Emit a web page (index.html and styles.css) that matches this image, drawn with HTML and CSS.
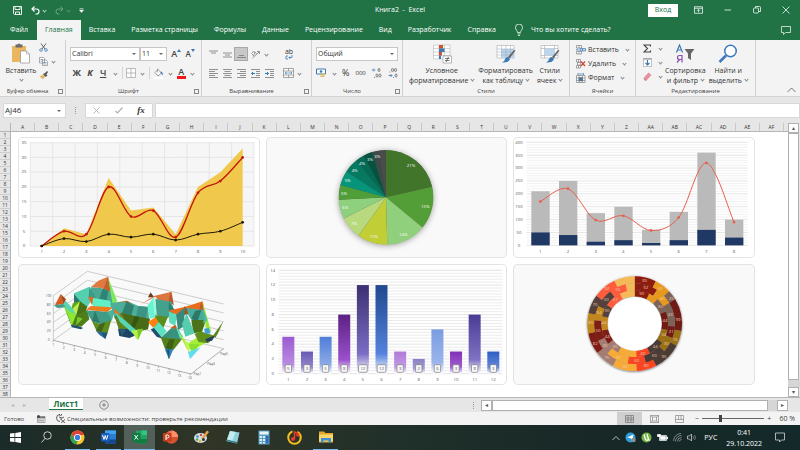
FILE: index.html
```html
<!DOCTYPE html>
<html lang="ru">
<head>
<meta charset="utf-8">
<title>Книга2 - Excel</title>
<link rel="stylesheet" href="styles.css">
</head>
<body>
<header class="titlebar">
  <div class="quick">
    <button aria-label="Сохранить"><svg width="9" height="9" viewBox="0 0 18 18" fill="none" stroke="#fff" stroke-width="1.8"><path d="M1 1h16v16H3l-2-2zM4 1v6h10V1M5 17v-5h8v5"/></svg></button>
    <button aria-label="Отменить"><svg width="9" height="9" viewBox="0 0 18 18" fill="none" stroke="#fff" stroke-width="2.4"><path d="M7 1L2 6l5 5M2 6h9a5 5 0 0 1 0 10H9"/></svg></button>
    <i class="caret pale"></i>
    <button class="dim" aria-label="Повторить"><svg width="9" height="9" viewBox="0 0 18 18" fill="none" stroke="#fff" stroke-width="2"><path d="M11 1l5 5-5 5M16 6H7a5 5 0 0 0 0 10h2"/></svg></button>
    <i class="caret pale dim"></i>
    <button class="custom" aria-label="Настройка"><svg width="5" height="5" viewBox="0 0 10 10"><path d="M1 1h8M1 4h8L5 9z" fill="#fff" stroke="#fff"/></svg></button>
  </div>
  <h1>Книга2 &nbsp;-&nbsp; Excel</h1>
  <div class="window-tools">
    <button class="login">Вход</button>
    <button aria-label="Параметры ленты"><svg width="9" height="8" viewBox="0 0 18 15" fill="none" stroke="#fff" stroke-width="1.5"><path d="M1 1h16v13H1zM1 4h16M9 12V7M6 9l3-3 3 3"/></svg></button>
    <button aria-label="Свернуть"><svg width="8" height="8" viewBox="0 0 16 16" stroke="#fff" stroke-width="1.5"><path d="M1 8h13"/></svg></button>
    <button aria-label="Развернуть"><svg width="8" height="8" viewBox="0 0 16 16" fill="none" stroke="#fff" stroke-width="1.5"><rect x="1" y="4" width="10" height="10" rx="2"/><path d="M5 4V1h8q2 0 2 2v8h-3"/></svg></button>
    <button aria-label="Закрыть"><svg width="8" height="8" viewBox="0 0 16 16" stroke="#fff" stroke-width="1.5"><path d="M1 1l14 14M15 1L1 15"/></svg></button>
  </div>
</header>
<nav class="tabs">
  <button>Файл</button><button class="on">Главная</button><button>Вставка</button><button>Разметка страницы</button><button>Формулы</button><button>Данные</button><button>Рецензирование</button><button>Вид</button><button>Разработчик</button><button>Справка</button>
  <button class="ask"><svg width="8" height="12" viewBox="0 0 16 24" fill="none" stroke="#fff" stroke-width="1.5"><path d="M5 17c0-4-4-5-4-10a7 7 0 0 1 14 0c0 5-4 6-4 10zM5 20h6M6 23h4"/></svg>Что вы хотите сделать?</button>
  <button class="comment" aria-label="Примечания"><svg width="10" height="9" viewBox="0 0 20 18" fill="none" stroke="#fff" stroke-width="1.4"><path d="M1 1h18v12H9l-4 4v-4H1z"/></svg></button>
</nav>
<section class="ribbon">
  <div class="group clipboard">
    <div class="tools">
      <button class="big"><svg width="20" height="21" viewBox="0 0 40 42"><path d="M2 6h28v32H2z" fill="#eab65f"/><path d="M9 3h4q3-4 6 0h4v6H9z" fill="#6a6a6a"/><path d="M19 16h12l6 6v18H19z" fill="#fff" stroke="#888" stroke-width="1.3"/><path d="M31 16v6h6" fill="none" stroke="#888"/></svg><span>Вставить</span><i class="caret"></i></button>
      <div class="stack">
        <button aria-label="Вырезать"><svg width="9" height="9" viewBox="0 0 18 18" fill="none"><path d="M4 1l8 11M14 1L6 12" stroke="#555" stroke-width="1.8"/><circle cx="4" cy="14" r="2.7" stroke="#3c78b4" stroke-width="1.5"/><circle cx="14" cy="14" r="2.7" stroke="#3c78b4" stroke-width="1.5"/></svg></button>
        <button aria-label="Копировать"><svg width="9" height="9" viewBox="0 0 18 18" fill="#fff" stroke="#777" stroke-width="1.2"><path d="M1 1h8l2 2v9H1zM7 6h7l3 3v8H7z"/><path d="M3 5h5M3 8h4M9 11h6M9 14h6" stroke="#3c78b4"/></svg><i class="caret"></i></button>
        <button aria-label="Формат по образцу"><svg width="9" height="9" viewBox="0 0 18 18"><path d="M1 11l8-4 3 4-4 6z" fill="#e5b869"/><path d="M8 6l5 6 4-3-2-2 3-5-2-2-4 4z" fill="#5a5a5a"/></svg></button>
      </div>
    </div>
    <div class="label wide">Буфер обмена<i class="launch"></i></div>
  </div>
  <div class="group font">
    <div class="tools rows">
      <div class="row">
        <span class="combo name"><select aria-label="Шрифт"><option>Calibri</option></select></span>
        <span class="combo size"><select aria-label="Размер"><option>11</option></select></span>
        <button class="letter grow" aria-label="Увеличить размер">A<svg width="4" height="3" viewBox="0 0 8 6" fill="#3c78b4"><path d="M0 6l4-6 4 6z"/></svg></button><button class="letter shrink" aria-label="Уменьшить размер">A<svg width="4" height="3" viewBox="0 0 8 6" fill="#3c78b4"><path d="M0 0l4 6 4-6z"/></svg></button>
      </div>
      <div class="row formats">
        <button class="letter bold">Ж</button><button class="letter ital">К</button><button class="letter under">Ч</button><i class="caret"></i><i class="rule"></i>
        <button aria-label="Границы"><svg width="10" height="10" viewBox="0 0 20 20" fill="#fff" stroke="#999" stroke-width="1.3"><path d="M1 1h18v18H1zM10 1v18M1 10h18"/></svg></button><i class="caret"></i><i class="rule"></i>
        <button aria-label="Заливка"><svg width="11" height="11" viewBox="0 0 22 22"><path d="M4 9l6-6 7 7-7 6z" fill="#fff" stroke="#666" stroke-width="1.3"/><path d="M9 1v8" stroke="#666"/><path d="M16 7q5 2 3 8-2-3-4-6" fill="#3c78b4"/><path d="M1 18h18v4H1z" fill="#fff"/></svg></button><i class="caret"></i>
        <button class="letter color">A</button><i class="caret"></i>
      </div>
    </div>
    <div class="label">Шрифт<i class="launch"></i></div>
  </div>
  <div class="group align">
    <div class="tools rows">
      <div class="row">
        <button aria-label="По верхнему краю"><svg class="ln" viewBox="0 0 18 18"><path d="M0 2h18M4 6h10"/></svg></button>
        <button aria-label="По середине"><svg class="ln" viewBox="0 0 18 18"><path d="M0 6h18M4 10h10M0 14h18"/></svg></button>
        <button class="pressed" aria-label="По нижнему краю"><svg class="ln" viewBox="0 0 18 18"><path d="M4 11h10M0 15h18"/></svg></button>
        <button aria-label="Ориентация"><svg class="ln" viewBox="0 0 18 18"><path d="M3 16L16 4M12 3h5v5M1 7l5 5M2 5q3-3 5 0t-2 5M7 3l4 4"/></svg></button><i class="caret"></i>
        <button class="wrap" aria-label="Перенести текст"><span>ab</span><svg width="8" height="5" viewBox="0 0 16 10" fill="none" stroke="#3c78b4" stroke-width="1.6"><path d="M6 2H2v6h4M14 0v5H8M10 3L8 5l2 3"/></svg></button>
      </div>
      <div class="row">
        <button aria-label="По левому краю"><svg class="ln" viewBox="0 0 18 18"><path d="M0 1h18M0 5h12M0 9h18M0 13h12M0 17h18"/></svg></button>
        <button aria-label="По центру"><svg class="ln" viewBox="0 0 18 18"><path d="M0 1h18M3 5h12M0 9h18M3 13h12M0 17h18"/></svg></button>
        <button aria-label="По правому краю"><svg class="ln" viewBox="0 0 18 18"><path d="M0 1h18M6 5h12M0 9h18M6 13h12M0 17h18"/></svg></button>
        <button aria-label="Уменьшить отступ"><svg class="ln" viewBox="0 0 18 18"><path d="M0 1h18M10 5h8M10 9h8M10 13h8M0 17h18"/><path class="blue" d="M8 9H1M4 6L1 9l3 3"/></svg></button>
        <button aria-label="Увеличить отступ"><svg class="ln" viewBox="0 0 18 18"><path d="M0 1h18M10 5h8M10 9h8M10 13h8M0 17h18"/><path class="blue" d="M0 9h7M4 6l3 3-3 3"/></svg></button>
        <button class="merge" aria-label="Объединить"><svg width="11" height="10" viewBox="0 0 22 20" fill="#fff" stroke="#777" stroke-width="1.3"><path d="M1 1h20v18H1zM1 6h20M1 14h20M11 1v5M11 14v5"/><path d="M4 10h14M7 8l-3 2 3 2M15 8l3 2-3 2" stroke="#3c78b4"/></svg></button><i class="caret"></i>
      </div>
    </div>
    <div class="label">Выравнивание<i class="launch"></i></div>
  </div>
  <div class="group number">
    <div class="tools rows">
      <div class="row"><span class="combo general"><select aria-label="Числовой формат"><option>Общий</option></select></span></div>
      <div class="row">
        <button aria-label="Финансовый"><svg width="11" height="10" viewBox="0 0 22 20"><path d="M1 2h18v10H1z" fill="#fff" stroke="#3c78b4" stroke-width="2"/><circle cx="10" cy="7" r="2.5" fill="#3c78b4"/><path d="M11 11h8v3h-8zM9 15h8v3H9z" fill="#e4b657"/></svg></button><i class="caret"></i>
        <button class="pct">%</button><button class="thou">000</button>
        <button class="dec" aria-label="Увеличить разрядность"><svg width="10" height="10" viewBox="0 0 20 20"><path d="M7 4H1M4 1L1 4l3 3" fill="none" stroke="#3c78b4" stroke-width="1.6"/><g fill="none" stroke="#555" stroke-width="1.4"><ellipse cx="14" cy="4" rx="2" ry="3.2"/><ellipse cx="10" cy="15" rx="2" ry="3.2"/><ellipse cx="16" cy="15" rx="2" ry="3.2"/><path d="M5 18v2"/></g></svg></button>
        <button class="dec" aria-label="Уменьшить разрядность"><svg width="10" height="10" viewBox="0 0 20 20"><path d="M1 15h7M5 12l3 3-3 3" fill="none" stroke="#3c78b4" stroke-width="1.6"/><g fill="none" stroke="#555" stroke-width="1.4"><ellipse cx="9" cy="4" rx="2" ry="3.2"/><ellipse cx="15" cy="4" rx="2" ry="3.2"/><ellipse cx="16" cy="15" rx="2" ry="3.2"/><path d="M4 7v2M11 18v2"/></g></svg></button>
      </div>
    </div>
    <div class="label">Число<i class="launch"></i></div>
  </div>
  <div class="group styles">
    <div class="tools">
      <button class="big"><svg width="20" height="20" viewBox="0 0 40 40"><path d="M3 2h33v28H3zM3 9h33M3 16h33M3 23h33M14 2v28M25 2v28" fill="#fff" stroke="#aaa"/><path d="M14 2h8v7h-8zM14 16h6v7h-6z" fill="#d0532f"/><path d="M14 9h11v7H14zM14 23h4v7h-4z" fill="#3c78b4"/><path d="M22 24h17v14H22z" fill="#fff" stroke="#777"/><path d="M26 29h9M26 33h9M33 26l-5 10" stroke="#444" stroke-width="1.4"/></svg><span>Условное<br>форматирование <i class="caret"></i></span></button>
      <button class="big"><svg width="20" height="20" viewBox="0 0 40 40"><path d="M2 3h34v25H2z" fill="#fff" stroke="#999"/><path d="M11 10h25v18H11z" fill="#bcd4ec"/><path d="M2 10h34M2 16h34M2 22h34M11 3v25M20 3v25M29 3v25" fill="none" stroke="#9ab"/><path d="M39 13L27 29l-3-3 12-14z" fill="#666"/><path d="M24 26l4 4q-3 8-16 7 6-3 6-7 2-4 6-4" fill="#3c78b4"/></svg><span>Форматировать<br>как таблицу <i class="caret"></i></span></button>
      <button class="big"><svg width="20" height="20" viewBox="0 0 40 40"><path d="M2 3h34v25H2zM2 9h34M2 23h34M9 3v25M29 3v25" fill="#fff" stroke="#999"/><path d="M9 9h20v14H9z" fill="#bcd4ec"/><path d="M39 13L27 29l-3-3 12-14z" fill="#666"/><path d="M24 26l4 4q-3 8-16 7 6-3 6-7 2-4 6-4" fill="#3c78b4"/></svg><span>Стили<br>ячеек <i class="caret"></i></span></button>
    </div>
    <div class="label plain">Стили</div>
  </div>
  <div class="group cells">
    <div class="tools stack">
      <button><svg width="10" height="10" viewBox="0 0 20 20" fill="#fff" stroke="#777" stroke-width="1.3"><path d="M1 1h10v5H1zM1 13h10v5H1zM6 1v5M6 13v5"/><path d="M8 7h11v5H8zM13 7v5" fill="#bcd4ec" stroke="#3c78b4"/><path d="M6 9.500H1M3 7L1 9.500 3 12" stroke="#3c78b4"/></svg>Вставить<i class="caret"></i></button>
      <button><svg width="10" height="10" viewBox="0 0 20 20" fill="#fff" stroke="#777" stroke-width="1.3"><path d="M1 1h8v5H1zM1 13h8v5H1zM5 1v5M5 13v5M3 7h6v5H3z"/><path d="M10 5l8 9M18 5l-8 9" stroke="#d0432f" stroke-width="2.4"/></svg>Удалить<i class="caret"></i></button>
      <button><svg width="10" height="10" viewBox="0 0 20 20" fill="#fff" stroke="#777" stroke-width="1.3"><path d="M1 5h17v14H1zM1 10h17M1 15h17M6 5v14M13 5v14"/><path d="M6 9h7v7H6z" fill="#3c78b4"/><path d="M4 2h11M4 0v4M15 0v4" stroke="#3c78b4"/></svg>Формат<i class="caret"></i></button>
    </div>
    <div class="label plain">Ячейки</div>
  </div>
  <div class="group edit">
    <div class="tools">
      <div class="stack">
        <button aria-label="Сумма"><svg width="9" height="9" viewBox="0 0 18 18" fill="none" stroke="#444" stroke-width="2.2"><path d="M15 5V2H2l7 7-7 7h13v-3"/></svg><i class="caret"></i></button>
        <button aria-label="Заполнить"><svg width="9" height="9" viewBox="0 0 18 18" fill="#fff" stroke="#888"><path d="M1 1h16v16H1z"/><path d="M1 2h16" stroke-width="2"/><path d="M9 4v10M5 10l4 4 4-4" fill="none" stroke="#3c78b4" stroke-width="2.4"/></svg><i class="caret"></i></button>
        <button aria-label="Очистить"><svg width="9" height="9" viewBox="0 0 18 18"><path d="M1 12L11 1l6 5L7 17H4z" fill="#e8909c"/><path d="M1 12l6 5H4z" fill="#c9606e"/></svg><i class="caret"></i></button>
      </div>
      <button class="big"><svg width="20" height="20" viewBox="0 0 40 40"><path d="M3 17L9 2l6 15M5 12h8" fill="none" stroke="#3c78b4" stroke-width="2.4"/><path d="M14 37V23H9q-4 0-4 4t4 4h5M9 31l-5 6" fill="none" stroke="#8a4fb0" stroke-width="2.400"/><path d="M19 10h20l-7 9v13l-6-4v-9z" fill="#666"/></svg><span>Сортировка<br>и фильтр <i class="caret"></i></span></button>
      <button class="big"><svg width="20" height="20" viewBox="0 0 40 40"><circle cx="25" cy="14" r="11.500" fill="#fff" stroke="#3c78c0" stroke-width="3"/><path d="M16 23L3 36" stroke="#3c78c0" stroke-width="5"/></svg><span>Найти и<br>выделить <i class="caret"></i></span></button>
    </div>
    <div class="label plain">Редактирование</div>
  </div>
  <button class="collapse" aria-label="Свернуть ленту"><svg width="9" height="6" viewBox="0 0 18 12" fill="none" stroke="#555" stroke-width="1.6"><path d="M1 10l8-8 8 8"/></svg></button>
</section>
<section class="formula">
  <span class="combo cell"><input aria-label="Имя" value="AJ46"></span>
  <i class="grip"></i>
  <div class="fx">
    <button aria-label="Отмена"><svg width="7" height="7" viewBox="0 0 14 14" stroke="#b0b0b0" stroke-width="1.8"><path d="M1 1l12 12M13 1L1 13"/></svg></button>
    <button aria-label="Ввод"><svg width="8" height="7" viewBox="0 0 16 14" fill="none" stroke="#b0b0b0" stroke-width="2.4"><path d="M1 8l4 4L15 1"/></svg></button>
    <button class="fn">fx</button>
  </div>
  <input class="expr" aria-label="Строка формул">
</section>
<main class="sheet">
  <div class="corner"></div>
  <div class="cols" id="cols"></div>
  <div class="vscroll"><button aria-label="Вверх">▴</button><div class="track"></div><div class="rest"></div><button aria-label="Вниз">▾</button></div>
  <div class="nums" id="nums"></div>
  <div class="canvas">
    <svg class="chart" id="area" viewBox="54 126 725 363"></svg>
    <svg class="chart hatch" id="pie" viewBox="11 21 725 363"></svg>
    <svg class="chart" id="combo" viewBox="25 51 725 363"></svg>
    <svg class="chart hatch" id="surface" viewBox="54 12 725 363"></svg>
    <svg class="chart" id="bars" viewBox="11 12 725 363"></svg>
    <svg class="chart hatch" id="rings" viewBox="25 14 725 363"></svg>
  </div>
</main>
<footer class="sheets">
  <span class="arrows"><i>◂</i><i>▸</i></span>
  <button class="sheet-tab">Лист1</button>
  <button class="add" aria-label="Новый лист"><svg width="10" height="10" viewBox="0 0 20 20" fill="none" stroke="#666" stroke-width="1.4"><circle cx="10" cy="10" r="8.500"/><path d="M10 6v8M6 10h8"/></svg></button>
  <i class="grip"></i>
  <div class="hscroll"><button aria-label="Влево">◂</button><div class="track"></div><div class="rest"></div><button aria-label="Вправо">▸</button></div>
</footer>
<div class="status">
  <span class="ready">Готово</span>
  <svg width="9" height="8" viewBox="0 0 18 16"><path d="M1 3h15v12H1z" fill="#fff" stroke="#555"/><path d="M1 3h15v4H1z" fill="#777"/><path d="M4 9v4M8 9v4M12 9v4" stroke="#555" stroke-width="2"/><circle cx="3" cy="3" r="3" fill="#444"/></svg>
  <svg class="acc" width="10" height="9" viewBox="0 0 20 18" fill="none" stroke="#444" stroke-width="1.700"><path d="M8 1a7 7 0 1 0 0 14M9 3a2 2 0 1 1 .1 0M6 6l6 2 4-2M10 8v4M10 11l8 7M18 11l-8 7"/></svg>
  <span class="access">Специальные возможности: проверьте рекомендации</span>
  <div class="views">
    <button class="on" aria-label="Обычный"><svg width="9" height="8" viewBox="0 0 18 16" fill="none" stroke="#666" stroke-width="1.2"><path d="M1 1h16v14H1zM1 6h16M1 10h16M6 1v14M12 1v14"/></svg></button>
    <button aria-label="Разметка"><svg width="9" height="8" viewBox="0 0 18 16" fill="none" stroke="#777" stroke-width="1.2"><path d="M1 1h16v14H1zM5 4h8v8H5zM1 1l4 3M17 1l-4 3M1 15l4-3M17 15l-4-3"/></svg></button>
    <button aria-label="Страничный"><svg width="9" height="8" viewBox="0 0 18 16" fill="none" stroke="#777" stroke-width="1.2"><path d="M1 1h16v14H1zM7 1v8H1M12 1v8h5M7 9h5"/></svg></button>
  </div>
  <label class="zoom"><span>−</span><input type="range" min="0" max="100" value="28" aria-label="Масштаб"><span>+</span></label>
  <span class="percent">60 %</span>
</div>
<nav class="taskbar">
  <button aria-label="Пуск"><svg width="11" height="11" viewBox="0 0 22 22" fill="#fff"><path d="M0 3l9-1v8H0zM10.500 2L22 0v10H10.500zM0 12h9v8l-9-1zM10.500 12H22v10l-11.500-2z"/></svg></button>
  <button aria-label="Поиск"><svg width="11" height="12" viewBox="0 0 22 24" fill="none" stroke="#ddd" stroke-width="1.800"><circle cx="13" cy="9" r="7.500"/><path d="M8 15l-7 8"/></svg></button>
  <button class="run" aria-label="Chrome"><svg width="15" height="15" viewBox="0 0 30 30"><circle cx="15" cy="15" r="14" fill="#f6c52c"/><path d="M3 8a14 14 0 0 1 25 2H15L9 18z" fill="#e04434"/><path d="M3 8l6 10 6 4-2 7A14 14 0 0 1 3 8" fill="#2fa253"/><circle cx="15" cy="15" r="7" fill="#fff"/><circle cx="15" cy="15" r="5.300" fill="#3c7be0"/></svg></button>
  <button class="run" aria-label="Word"><svg width="15" height="14" viewBox="0 0 30 28"><rect x="8" y="1" width="22" height="26" rx="2" fill="#2b7cd3"/><path d="M8 1h22v7H8z" fill="#41a5ee"/><path d="M8 19h22v8H8z" fill="#16498c"/><rect y="6" width="17" height="17" rx="2" fill="#185abd"/><path d="M3 10l3 9 2.500-8 2.500 8 3-9" fill="none" stroke="#fff" stroke-width="2"/></svg></button>
  <button class="run active" aria-label="Excel"><svg width="15" height="14" viewBox="0 0 30 28"><rect x="8" y="1" width="22" height="26" rx="2" fill="#21a366"/><path d="M19 1h11v9H19z" fill="#33c481"/><path d="M8 18h22v9H8z" fill="#107c41"/><rect y="6" width="17" height="17" rx="2" fill="#107c41"/><path d="M5 10l7 9M12 10l-7 9" stroke="#fff" stroke-width="2"/></svg></button>
  <button aria-label="PowerPoint"><svg width="15" height="14" viewBox="0 0 30 28"><circle cx="17" cy="14" r="13" fill="#ed6c47"/><path d="M17 1a13 13 0 0 1 13 13H17z" fill="#ff8f6b"/><path d="M4 14h26a13 13 0 0 1-26 0" fill="#d35230"/><rect y="6" width="17" height="17" rx="2" fill="#c43e1c"/><path d="M6 20V10h3q3 0 3 3t-3 3H6" fill="none" stroke="#fff" stroke-width="2"/></svg></button>
  <button aria-label="Paint"><svg width="15" height="14" viewBox="0 0 30 28"><ellipse cx="13" cy="16" rx="13" ry="10" fill="#d5e0e6"/><circle cx="7" cy="13" r="2.500" fill="#2f8fd0"/><circle cx="14" cy="10" r="2.500" fill="#d94b3a"/><circle cx="6" cy="19" r="2.500" fill="#54a845"/><circle cx="12" cy="22" r="2.500" fill="#e2b52e"/><path d="M14 17L26 1l4 3-12 16z" fill="#e5a04a"/><circle cx="19" cy="19" r="3" fill="#243a3a"/></svg></button>
  <button aria-label="Блокнот"><svg width="14" height="14" viewBox="0 0 28 28"><path d="M8 2l19 3-5 22-21-5z" fill="#8fd0dc"/><path d="M8 2l11 2-7 20-11-2z" fill="#c3ecf0"/><path d="M1 22l21 5v-3L2 19z" fill="#3c7b92"/></svg></button>
  <button aria-label="Калькулятор"><svg width="12" height="15" viewBox="0 0 24 30"><path d="M1 1h22v28H1z" fill="#5b9dc4"/><path d="M3 3h18v6H3z" fill="#e8f4fa"/><path d="M3 12h5v4H3zM10 12h4v4h-4zM3 18h5v4H3zM10 18h4v4h-4zM3 24h5v3H3zM10 24h4v3h-4z" fill="#dff0f8"/><path d="M16 12h5v15h-5z" fill="#2f6cb8"/></svg></button>
  <button aria-label="Яндекс Музыка"><svg width="15" height="15" viewBox="0 0 30 30"><circle cx="15" cy="15" r="12.500" fill="none" stroke="#f5c21c" stroke-width="4"/><path d="M11 0h10v7H11z" fill="#29332a"/><circle cx="12" cy="18" r="4" fill="#ee3b2c"/><path d="M15 18V4l8 4v4l-5-2" fill="none" stroke="#ee3b2c" stroke-width="3"/></svg></button>
  <button class="run" aria-label="Проводник"><svg width="14" height="12" viewBox="0 0 28 24"><path d="M0 1h10l3 3h15v19H0z" fill="#e5a62b"/><path d="M0 7h28v14H0z" fill="#fbd668"/><path d="M4 14h20v9h-5v-4H9v4H4z" fill="#3f8ed8"/></svg></button>
  <div class="tray">
    <svg width="8" height="6" viewBox="0 0 16 10" fill="none" stroke="#eee" stroke-width="1.500"><path d="M1 9l7-7 7 7"/></svg>
    <svg width="11" height="11" viewBox="0 0 22 22"><circle cx="11" cy="11" r="10" fill="#2f9fdc"/><path d="M4 11l13-6-2 11-5-4z" fill="#fff"/><circle cx="17" cy="16" r="4.500" fill="#8a8f92"/></svg>
    <svg width="11" height="11" viewBox="0 0 22 22"><circle cx="11" cy="11" r="10" fill="#71b640"/><path d="M6 5l3 10q2 3 6 0l-3-11M15 15l3 2" fill="none" stroke="#fff" stroke-width="2.600"/></svg>
    <svg width="11" height="9" viewBox="0 0 22 18" fill="none" stroke="#fff" stroke-width="1.500"><path d="M5 5h14v10H5z"/><path d="M7 7h10v6H7zM20 8h1v4h-1z" fill="#fff"/><path d="M1 3h6v4H1z" fill="#fff"/></svg>
    <svg width="9" height="9" viewBox="0 0 18 18" fill="none" stroke="#aaa" stroke-width="1.400"><path d="M1 16A15 15 0 0 1 16 1M5 17A12 12 0 0 1 17 5M9 17a8 8 0 0 1 8-8M13 17a4 4 0 0 1 4-4"/></svg>
    <svg width="10" height="9" viewBox="0 0 20 18" fill="none" stroke="#ddd" stroke-width="1.400"><path d="M1 6h4l4-4v14l-4-4H1z"/><path d="M12 6q2 3 0 6M15 4q4 5 0 10" stroke="#999"/></svg>
    <span class="lang">РУС</span>
    <time><span>0:41</span><span>29.10.2022</span></time>
    <svg class="note" width="10" height="11" viewBox="0 0 20 22" fill="none" stroke="#ddd" stroke-width="1.500"><path d="M1 2h18v14h-6l-4 4v-4H1z"/></svg>
  </div>
</nav>
<script src="charts.js"></script>
</body>
</html>
```
FILE: styles.css
```css
* { box-sizing: border-box; }
body {
  margin: 0;
  height: 100vh;
  display: flex;
  flex-direction: column;
  overflow: hidden;
  background: #e6e6e6;
  color: #333;
  font: 7px/10px "Open Sans", "Noto Sans", sans-serif;
}
button, input, select {
  font: inherit;
  color: inherit;
  margin: 0;
  padding: 0;
  border: 0;
  background: none;
  border-radius: 0;
  outline: 0;
  appearance: none;
}
button { display: flex; align-items: center; justify-content: center; white-space: nowrap; }
svg { display: block; flex: none; }
.caret {
  display: inline-block;
  flex: none;
  width: 3px;
  height: 3px;
  border: solid #888;
  border-width: 0 1px 1px 0;
  transform: rotate(45deg);
}
.caret.pale { border-color: #b5d3c2; }
.dim { opacity: .35; }

.titlebar { display: grid; grid-template-columns: 1fr auto 1fr; align-items: center; height: 20px; flex: none; background: #217346; color: #fff; }
.titlebar h1 { margin: 0; font-size: 7px; font-weight: 400; }
.quick { display: flex; align-items: center; gap: 7px; padding-left: 13px; }
.quick button:nth-child(n+2) { margin-left: 2px; }
.quick .caret { margin-left: -4px; }
.window-tools { display: flex; align-items: center; justify-content: flex-end; gap: 21px; padding-right: 10px; }
.login { width: 30px; height: 13px; background: #fff; color: #217346; margin-right: -5px; }

.tabs { display: flex; height: 20px; flex: none; background: #217346; color: #fff; padding-left: 2px; }
.tabs button { padding: 0 8px; }
.tabs .on { background: #f3f3f3; color: #217346; }
.tabs button:first-child { padding-right: 9px; }
.tabs .ask { gap: 8px; padding-left: 11px; }
.tabs .comment { margin-left: auto; padding-right: 9px; }

.ribbon { display: flex; height: 57px; flex: none; background: #f3f3f3; border-bottom: 1px solid #d2d2d2; }
.group { display: flex; flex-direction: column; border-right: 1px solid #d0d0d0; flex: none; }
.clipboard { width: 66px; }
.font { width: 136px; }
.align { width: 110px; }
.number { width: 91px; }
.styles { width: 167px; }
.cells { width: 66px; }
.edit { width: 120px; }
.group .tools { display: flex; flex: 1; padding: 3px 4px 0; }
.group .label { position: relative; height: 10px; padding-right: 10px; text-align: center; font-size: 6px; color: #444; }
.group .label.plain { padding-right: 0; }
.launch { position: absolute; right: 2px; top: 3px; width: 5px; height: 5px; border: solid #888; border-width: 1px 0 0 1px; }
.launch::after { content: ""; position: absolute; right: 0; bottom: 0; width: 3px; height: 3px; border: solid #888; border-width: 0 1px 1px 0; }
.big { flex-direction: column; justify-content: flex-start; text-align: center; gap: 2px; }
.clipboard .big { width: 34px; }
.clipboard .tools { gap: 0; }
.stack { display: flex; flex-direction: column; gap: 5px; }
.stack button { gap: 4px; justify-content: flex-start; height: 9px; }
.clipboard .stack button { padding-left: 1px; }
.tools.rows { flex-direction: column; gap: 3px; padding-top: 6px; }
.row { display: flex; align-items: center; height: 16px; }
.combo { position: relative; display: flex; height: 14px; background: #fff; border: 1px solid #c6c6c6; }
.combo > * { width: 100%; padding-left: 1px; }
.combo::after { content: ""; position: absolute; right: 3px; top: 5px; border: solid transparent; border-width: 2px 2px 0; border-top-color: #666; }
.combo.name { width: 71px; }
.combo.size { width: 28px; }
.letter { width: 14px; height: 14px; font-size: 9px; font-weight: 600; color: #444; }
.letter svg { align-self: flex-start; margin-top: 2px; }
.grow { margin-left: 2px; }
.shrink { font-size: 8px; }
.formats { gap: 2px; }
.formats .letter { width: 12px; }
.formats .letter:first-child { margin-left: 1px; }
.formats .letter.bold { font-weight: 700; }
.formats .letter.ital { font-style: italic; font-weight: 700; }
.under { text-decoration: underline; }
.formats .letter.color { width: 10px; height: 11px; border-bottom: 3px solid #f01818; line-height: 8px; }
.formats .caret { margin: 0 3px; }
.rule { width: 1px; height: 12px; background: #d4d4d4; margin-right: 1px; }
.align .row button { width: 14px; height: 14px; }
.ln { width: 9px; height: 9px; fill: none; stroke: #777; stroke-width: 1.6; }
.ln .blue { stroke: #3c78b4; stroke-width: 2; }
.pressed { background: #c8c8c8; box-shadow: 0 0 0 1px #a8a8a8 inset; }
.align .caret { margin-left: 3px; }
.align .row .wrap { flex-direction: column; margin-left: 14px; line-height: 6px; }
.align .row .merge { margin-left: 5px; }
.number .row { gap: 6px; }
.combo.general { width: 83px; }
.pct { font-size: 9px; }
.thou { font-size: 6px; }
.styles .tools { padding-top: 4px; padding-left: 6px; gap: 4px; }
.big .caret { margin: 0 0 2px 1px; }
.cells .tools { padding-left: 6px; padding-top: 5px; }
.cells button { gap: 2px; }
.cells .caret { margin-left: 5px; }
.edit .tools { padding-left: 7px; padding-top: 4px; gap: 3px; }
.edit .stack .caret { margin-left: 3px; }
.collapse { margin: auto 4px 3px auto; }

.formula { display: flex; align-items: center; height: 26px; flex: none; padding: 0 0 0 3px; }
.combo.cell { width: 63px; height: 15px; border-color: #d8d8d8; font-size: 8px; }
.combo.cell::after { top: 6px; right: 4px; }
.grip { width: 1px; height: 7px; margin: 0 9px; border-left: 1px dotted #999; }
.fx { display: flex; align-items: center; justify-content: space-around; width: 68px; height: 15px; background: #fff; border: 1px solid #d8d8d8; margin-right: 2px; }
.fn { font: italic 600 9px/10px "Liberation Serif", serif; }
.expr { flex: 1; height: 15px; background: #fff; border: 1px solid #d8d8d8; }

.sheet { flex: 1; min-height: 0; display: grid; grid-template: 9px 1fr / 11px 1fr 12px; background: #fff; }
.corner { background: #e6e6e6; border: solid #b5b5b5; border-width: 0 1px 1px 0; }
.cols { display: grid; grid-template-columns: repeat(32, 1fr); padding-right: 4px; background: #e6e6e6; border-bottom: 1px solid #b5b5b5; font-size: 5px; line-height: 8px; text-align: center; }
.cols span { border-right: 1px solid #c8c8c8; }
.vscroll { grid-row: 1 / 3; grid-column: 3; display: flex; flex-direction: column; background: #e6e6e6; }
.nums { grid-column: 1; grid-row: 2; overflow: hidden; background: #e6e6e6; border-right: 1px solid #b5b5b5; font-size: 5px; display: grid; grid-auto-rows: 1fr; line-height: 6px; text-align: center; }
.nums span { border-bottom: 1px solid #cdcdcd; }
.canvas { grid-column: 2; grid-row: 2; display: grid; grid-template-columns: repeat(3, 1fr); gap: 6px; align-content: start; padding: 5px 33px 0 7px; }
.chart { width: 100%; height: auto; background: #fff; border-radius: 5px; box-shadow: 0 0 0 1px #e3e3e3 inset; font-size: 13px; fill: #555; text-anchor: middle; overflow: hidden; }
.hatch { background: #f9f9f9; }
.chart .light { fill: #fff; }
.vscroll button, .hscroll button { width: 11px; height: 10px; flex: none; background: #fff; border: 1px solid #b0b0b0; font-size: 6px; line-height: 6px; color: #555; }
.hscroll button { height: 11px; }
.vscroll .track { flex: 1; width: 11px; background: #fff; border: 1px solid #b0b0b0; }
.vscroll .rest { height: 7px; background: #d6d6d6; }

.sheets { display: flex; align-items: center; height: 15px; flex: none; border-top: 1px solid #b5b5b5; padding-right: 12px; }
.arrows { display: flex; gap: 9px; width: 49px; padding-left: 11px; color: #b5b5b5; font-size: 6px; }
.arrows i { font-style: normal; }
.sheet-tab { width: 34px; height: 12px; align-self: flex-start; background: #fff; border-bottom: 1px solid #217346; color: #217346; font-weight: 700; font-size: 8px; }
.add { margin-left: 16px; }
.sheets .grip { margin-left: auto; margin-right: 7px; }
.hscroll { display: flex; flex: 0 0 39%; }
.hscroll .track { flex: 1; background: #fff; border: 1px solid #b0b0b0; }
.hscroll .rest { width: 9px; background: #d6d6d6; }

.status { display: flex; align-items: center; height: 13px; flex: none; background: #f3f3f3; color: #444; font-size: 6px; }
.status .ready { width: 33px; padding-left: 4px; margin-right: 4px; }
.status .acc { margin-left: 10px; margin-right: 1px; }
.views { display: flex; margin-left: auto; }
.views button { width: 25px; height: 13px; }
.views .on { background: #cfcfcf; }
.zoom { display: flex; align-items: center; gap: 3px; margin-left: 3px; font-size: 7px; }
.zoom input { width: 62px; height: 9px; background: linear-gradient(#666, #666) center / 100% 1px no-repeat; }
.zoom input::-webkit-slider-thumb { appearance: none; width: 3px; height: 7px; background: #444; }
.percent { margin: 0 5px 0 8px; font-size: 7px; }

.taskbar { display: flex; height: 25px; flex: none; background: linear-gradient(90deg, #1a2b29, #303526 26%, #20302a 50%, #172827 75%, #14292a); color: #fff; }
.taskbar > button { width: 31px; padding-bottom: 1px; }
.taskbar .run { background: linear-gradient(#76b9ed, #76b9ed) center bottom / 25px 1px no-repeat; }
.taskbar .active { background: linear-gradient(#76b9ed, #76b9ed) center bottom / 100% 1px no-repeat, #53605a; }
.tray { display: flex; align-items: center; gap: 5px; margin-left: auto; padding-right: 15px; }
.lang { margin-left: 2px; }
.tray time { display: flex; flex-direction: column; align-items: center; margin: 0 8px 0 4px; line-height: 11px; }
```
FILE: charts.js
```js
const $ = id => document.getElementById(id);

const letter = i => (i > 25 ? 'A' : '') + String.fromCharCode(65 + i % 26);
$('cols').innerHTML = Array.from({ length: 32 }, (_, i) => `<span>${letter(i)}</span>`).join('');
$('nums').innerHTML = Array.from({ length: 38 }, (_, i) => `<span>${i + 1}</span>`).join('');

const text = (x, y, s, extra = '') => `<text x="${x}" y="${y}" ${extra}>${s}</text>`;
const line = (x1, y1, x2, y2, c, w = 1) => `<path d="M${x1} ${y1}L${x2} ${y2}" stroke="${c}" stroke-width="${w}"/>`;
const rect = (x, y, w, h, c, extra = '') => `<rect x="${x}" y="${y}" width="${w}" height="${h}" fill="${c}" ${extra}/>`;

function smooth(p) {
  let d = `M${p[0]}`;
  for (let i = 0; i < p.length - 1; i++) {
    const a = p[i - 1] || p[i], b = p[i], c = p[i + 1], e = p[i + 2] || c;
    d += `C${b[0] + (c[0] - a[0]) / 6} ${b[1] + (c[1] - a[1]) / 6} ${c[0] - (e[0] - b[0]) / 6} ${c[1] - (e[1] - b[1]) / 6} ${c}`;
  }
  return d;
}
const curve = (p, c, w, r) => `<path d="${smooth(p)}" fill="none" stroke="${c}" stroke-width="${w}"/>` +
  p.map(q => `<circle cx="${q[0]}" cy="${q[1]}" r="${r}" fill="${c}"/>`).join('');

function drawArea() {
  const pts = v => v.map((n, i) => [125 + 67 * i, 453 - n * 8.857]);
  let s = '<defs><pattern id="h" width="5" height="5" patternUnits="userSpaceOnUse"><rect width="5" height="5" fill="#fafafa"/><path d="M0 0l5 5" stroke="#e6e6e6"/></pattern></defs>' + rect(91, 142, 671, 311, 'url(#h)');
  for (let k = 0; k <= 10; k++) s += line(91 + 67.1 * k, 142, 91 + 67.1 * k, 453, '#dedede', 2);
  for (let k = 0; k <= 7; k++) s += line(91, 453 - 44.3 * k, 762, 453 - 44.3 * k, '#dedede', 2) + text(72, 457 - 44.3 * k, k * 5);
  s += `<polygon points="${pts([0, 6, 4, 23, 12, 13, 4, 20, 25, 33]).join(' ')} 728,453" fill="#f0c84c"/>`;
  s += curve(pts([0, 5, 4, 20, 10, 12, 3, 18, 22, 30]), '#c4160c', 4, 4);
  s += curve(pts([0, 2.5, 1.5, 4, 3, 4, 2, 4, 5, 8]), '#1c1608', 3, 4);
  for (let i = 0; i < 10; i++) s += text(125 + 67 * i, 475, i + 1);
  $('area').innerHTML = s;
}

const at = (cx, cy, r, deg) => [cx + r * Math.sin(deg * Math.PI / 180), cy - r * Math.cos(deg * Math.PI / 180)];

function drawPie() {
  const ends = [77, 129.5, 178.5, 215.6, 243.4, 267, 285, 303, 321, 332, 343, 352, 360];
  const colors = ['#40752a', '#539e36', '#90cf7c', '#c1ce36', '#b9d97e', '#8ed07e', '#4f9e38', '#06957a', '#067a61', '#046a54', '#04523f', '#3d4a46', '#4b4b4b'];
  let s = '<defs><filter id="sh" x="-20%" y="-20%" width="140%" height="140%"><feDropShadow dx="0" dy="3" stdDeviation="10" flood-opacity=".4"/></filter></defs><circle cx="371" cy="202" r="141" fill="#555" filter="url(#sh)"/>';
  let from = 0;
  ends.forEach((e, i) => {
    s += `<path d="M371 202L${at(371, 202, 142, from)}A142 142 0 0 1 ${at(371, 202, 142, e)}Z" fill="${colors[i]}"/>`;
    from = e;
  });
  [[446, 112, 21], [489, 233, 15], [423, 317, 14], [334, 325, 11], [275, 286, 7], [249, 238, 6], [245, 194, 5], [256, 157, 5], [277, 126, 4], [299, 106, 4], [323, 92, 3], [345, 85, 3]]
    .forEach(l => s += text(l[0], l[1], l[2] + '%', 'class="light"'));
  $('pie').innerHTML = s;
}

function drawCombo() {
  const y = v => 376 - v * .7725;
  let s = '';
  for (let v = 0; v <= 400; v += 10) s += line(66, y(v), 729, y(v), v % 50 ? '#ececec' : '#d9d9d9', 2);
  for (let v = 0; v <= 400; v += 50) s += text(43, y(v) + 4, v);
  const total = [210, 250, 125, 150, 60, 130, 360, 100], base = [50, 40, 14, 20, 9, 20, 60, 30];
  total.forEach((t, i) => {
    const x = 80 + 83 * i;
    s += rect(x, y(t), 55, t * .7725, '#bababa') + rect(x, y(base[i]), 55, base[i] * .7725, '#1f3864') + text(x + 27, 398, i + 1);
  });
  s += curve([170, 220, 98, 115, 58, 108, 320, 90].map((v, i) => [107 + 83 * i, y(v)]), '#e8604f', 3, 4);
  $('combo').innerHTML = s;
}

function drawBars() {
  const data = [[5, '#9a5bd0', '#b98be0'], [3, '#6757b4', '#9287cc'], [5, '#4f7dd6', '#8aaae6'], [8, '#5c2182', '#9a50cc'], [12, '#3c3070', '#7b6cc4'], [12, '#20488f', '#5482dc'], [3, '#b07ad8', '#c49ae4'], [2, '#8880c4', '#a59fd6'], [6, '#7a9ce0', '#9ab5ec'], [3, '#7d30b4', '#a25cd2'], [8, '#4a3c94', '#7f72c4'], [3, '#2c5cc4', '#6288dc']];
  let s = '<defs>' + data.map((d, i) => `<linearGradient id="b${i}" x2="0" y2="1"><stop stop-color="${d[1]}"/><stop offset="${.8 - .3 / d[0]}" stop-color="${d[2]}"/><stop offset="1" stop-color="#fff"/></linearGradient>`).join('') + '</defs>';
  for (let k = 0; k <= 35; k++) s += line(49, 341 - k * 8.857, 720, 341 - k * 8.857, k % 5 ? '#e2e2e2' : '#d4d4d4', 2);
  for (let k = 0; k <= 7; k++) s += text(31, 345 - k * 44.3, k * 2);
  data.forEach((d, i) => {
    const x = 78 + 55.9 * i, h = d[0] * 22.143, w = d[0] > 9 ? 26 : 19;
    s += rect(x - 18, 341 - h, 36, h, `url(#b${i})`);
    s += rect(x - w / 2, 314, w, 23, '#f8f8f8', 'stroke="#777" stroke-width="2" rx="3"');
    s += text(x, 330, d[0]) + text(x, 362, i + 1);
  });
  $('bars').innerHTML = s;
}

function drawRings() {
  const colors = ['#8c1a10', '#e8991d', '#7c6359', '#6f1b14', '#9a7016', '#4b3a36', '#fb4524', '#f7aa38', '#a47c72', '#7e1b14', '#c2871c', '#54403b', '#ff5b3c', '#f6b958'];
  const rings = [
    [142, 121, [26.4, 46.7, 59, 98.8, 117.8, 153, 177.6, 207.5, 232, 258, 283, 306, 334.7, 360]],
    [121, 100, [33.5, 59, 94, 111, 133, 164, 190, 222.5, 245, 275, 296, 323, 347, 360]],
    [100, 82, [26, 43, 69, 101, 125, 153, 177, 210, 233, 258, 283, 304, 334, 360]]
  ];
  let s = '<defs><filter id="rs" x="-20%" y="-20%" width="140%" height="140%"><feDropShadow dx="0" dy="2" stdDeviation="3" flood-opacity=".6"/></filter></defs><g filter="url(#rs)">';
  rings.forEach(([R, r, ends]) => {
    let from = 0;
    ends.forEach((e, i) => {
      s += `<path d="M${at(390, 193, R, from)}A${R} ${R} 0 0 1 ${at(390, 193, R, e)}L${at(390, 193, r, e)}A${r} ${r} 0 0 0 ${at(390, 193, r, from)}Z" fill="${colors[i]}"/>`;
      from = e;
    });
  });
  s += '</g><circle cx="390" cy="193" r="80" fill="#fff"/>';
  [[420, 69, 85], [423, 90, 92], [411, 107, 90], [466, 92, 50], [473, 122, 40], [500, 123, 25], [467, 145, 35], [497, 169, 43], [481, 188, 44], [520, 184, 99], [500, 222, 21], [512, 244, 76], [477, 230, 34], [485, 258, 30], [452, 265, 44], [478, 295, 95], [449, 292, 50], [425, 324, 80], [396, 307, 60], [414, 286, 40], [361, 325, 90], [340, 300, 70], [306, 299, 75], [301, 264, 30], [331, 265, 35], [272, 256, 82], [280, 217, 50], [308, 237, 44], [258, 195, 80], [283, 163, 54], [297, 195, 44], [271, 140, 70], [305, 124, 50], [307, 157, 30], [306, 93, 92], [340, 94, 55], [332, 125, 57]]
    .forEach(l => s += text(l[0], l[1], l[2], 'fill="#f0cdb8"'));
  $('rings').innerHTML = s;
}

function drawSurface() {
  let s = '';
  for (let k = 0; k < 6; k++) {
    const d = 26.8 * k;
    s += line(160, 107 + d, 262, 34 + d, '#a0a0a0', 1.5) + line(262, 34 + d, 671, 132 + d, '#a0a0a0', 1.5) + text(146, 110 + d, 100 - 20 * k, 'font-size="10"');
  }
  s += line(160, 107, 160, 241, '#a0a0a0', 1.5) + line(160, 241, 573, 342, '#888', 2) + line(573, 342, 671, 266, '#888', 2);
  for (let i = 0; i < 14; i++) s += line(160 + 31.7 * i, 241 + 7.7 * i, 158 + 31.7 * i, 246 + 7.7 * i, '#888', 2) + text(160 + 31.5 * i, 258 + 7.7 * i, i + 1, 'font-size="10"');
  s += text(592, 345, 'Ряд1', 'font-size="10"') + text(633, 315, 'Ряд4', 'font-size="10"') + text(672, 285, 'Ряд5', 'font-size="10"');
  const faces = [
    ['#e07a42', '272,82 295,62 324,50 333,96 303,84'], ['#c0602c', '324,50 333,96 310,88'],
    ['#4ba892', '272,82 303,84 333,96 340,130 300,128 272,112'], ['#2f8478', '308,86 325,92 318,132 296,122'], ['#7de85c', '324,52 352,124 338,134'],
    ['#55cfae', '222,100 268,80 282,110 262,140 222,130'], ['#3b9a88', '268,80 290,118 266,118'], ['#2a776c', '222,102 242,126 222,140'],
    ['#66a81c', '218,130 240,124 260,150 232,172 214,150'], ['#b7f24c', '214,150 240,124 232,172'], ['#4a7118', '240,124 262,140 248,176 228,168'],
    ['#5bd4b4', '182,108 214,140 228,164 202,168'], ['#d85a1e', '182,102 190,132 165,136'], ['#a34618', '182,102 198,118 190,132'], ['#3f9d88', '161,136 190,132 198,142 172,144'],
    ['#8ee830', '190,136 202,150 228,164 234,190 214,196'], ['#49701c', '196,142 214,196 208,182'], ['#4f7d1b', '228,166 262,150 268,178 244,200 216,196'], ['#1f4f6c', '212,194 234,198 250,204 242,208 216,202'], ['#78c928', '232,170 248,176 228,196'],
    ['#5ff0c6', '268,112 330,122 338,140 280,142'], ['#e06a20', '264,110 280,112 276,136'], ['#f07c20', '258,150 272,138 340,142 322,156 285,152'],
    ['#3f9c86', '258,152 285,152 322,156 345,146 334,182 300,192 276,184'], ['#2f7c6c', '285,152 300,190 276,184'], ['#49b59a', '322,156 345,146 336,180'],
    ['#5d8d1e', '276,184 300,192 334,180 322,222 290,214'], ['#446618', '300,192 316,186 304,218 288,212'], ['#2c6d9c', '288,214 322,218 316,237 300,226'], ['#225478', '304,218 322,218 316,237'],
    ['#4cae97', '330,130 380,122 415,138 444,140 448,184 344,176'], ['#d5601e', '350,130 380,122 394,130 370,126'], ['#2f8070', '380,124 402,138 394,166 366,158'], ['#3b9484', '415,138 444,142 436,180 408,170'],
    ['#486b18', '344,170 366,158 404,168 450,176 444,208 400,218 356,204'], ['#5e861c', '346,172 366,160 380,208 356,206'], ['#37570f', '404,168 418,172 404,204 392,202'], ['#1d4464', '354,206 400,208 408,226 388,234 358,228'], ['#235c74', '356,206 378,208 366,228'],
    ['#e8711c', '344,146 354,156 374,180 366,168 342,158'], ['#56d6b4', '344,156 374,180 408,210 400,222 360,186'], ['#b6f24c', '394,212 426,208 412,241'], ['#7ec92a', '412,208 430,206 414,240'],
    ['#6b3c1c', '444,112 452,97 462,112'], ['#dc7440', '420,134 462,108 515,95 520,126 482,128 466,110'], ['#b9582c', '512,96 522,136 506,124'], ['#44a28c', '466,116 515,126 524,160 500,174 470,166'], ['#2e7f73', '506,126 524,150 506,166'], ['#69f2d2', '442,138 462,110 468,172 450,176'], ['#8affe0', '458,112 468,140 464,174'],
    ['#5a8c1e', '466,166 504,170 490,204 462,214'], ['#ff8010', '444,186 466,172 476,186 460,204'], ['#5ce2c0', '476,186 500,214 482,234 458,206'], ['#1e4d70', '452,208 462,204 488,236 470,230'],
    ['#e86c1c', '504,152 556,140 608,124 614,156 568,156 530,164'], ['#c05a2a', '604,126 614,156 596,154'], ['#a74c1c', '554,138 570,162 548,166'], ['#5cdcba', '506,154 530,164 526,198 508,188'], ['#358a7c', '528,164 556,142 550,200 534,210'], ['#49ac96', '560,144 612,150 618,186 578,184 566,168'], ['#2c776a', '586,152 604,150 592,186 574,176'],
    ['#4b7319', '574,180 618,180 606,216 580,220'], ['#9be63c', '608,126 634,216 618,206'], ['#4cba9e', '612,152 622,180 610,192'], ['#55cdae', '546,192 560,160 584,220 556,230'], ['#c65c1c', '512,204 526,194 536,210'], ['#39927e', '482,234 514,204 536,208 548,236 500,240'], ['#5ddcba', '526,196 550,230 540,236'],
    ['#56801c', '482,232 546,238 520,270 494,264'], ['#3f6114', '508,238 524,238 508,296 496,264'], ['#2f82b4', '494,266 520,268 507,298'], ['#1f5274', '507,298 500,270 508,268'],
    ['#a4ee38', '536,218 564,250 602,226 618,248 584,268 560,266'], ['#5f901e', '584,222 602,214 646,228 624,250 596,246'], ['#c2f45a', '552,240 572,252 566,280'], ['#8be030', '566,252 598,252 578,288'], ['#62dcf0', '564,276 602,262 570,298'],
    ['#3f9fd8', '612,206 626,204 632,220 616,222'], ['#223f5c', '616,238 646,226 636,242 620,246'], ['#5d8624', '640,226 670,184 656,216 646,234'], ['#3e5c1a', '642,224 670,184 650,212']
  ];
  s += faces.map(f => `<polygon points="${f[1]}" fill="${f[0]}"/>`).join('');
  $('surface').innerHTML = s;
}

drawArea();
drawPie();
drawCombo();
drawSurface();
drawBars();
drawRings();
```
